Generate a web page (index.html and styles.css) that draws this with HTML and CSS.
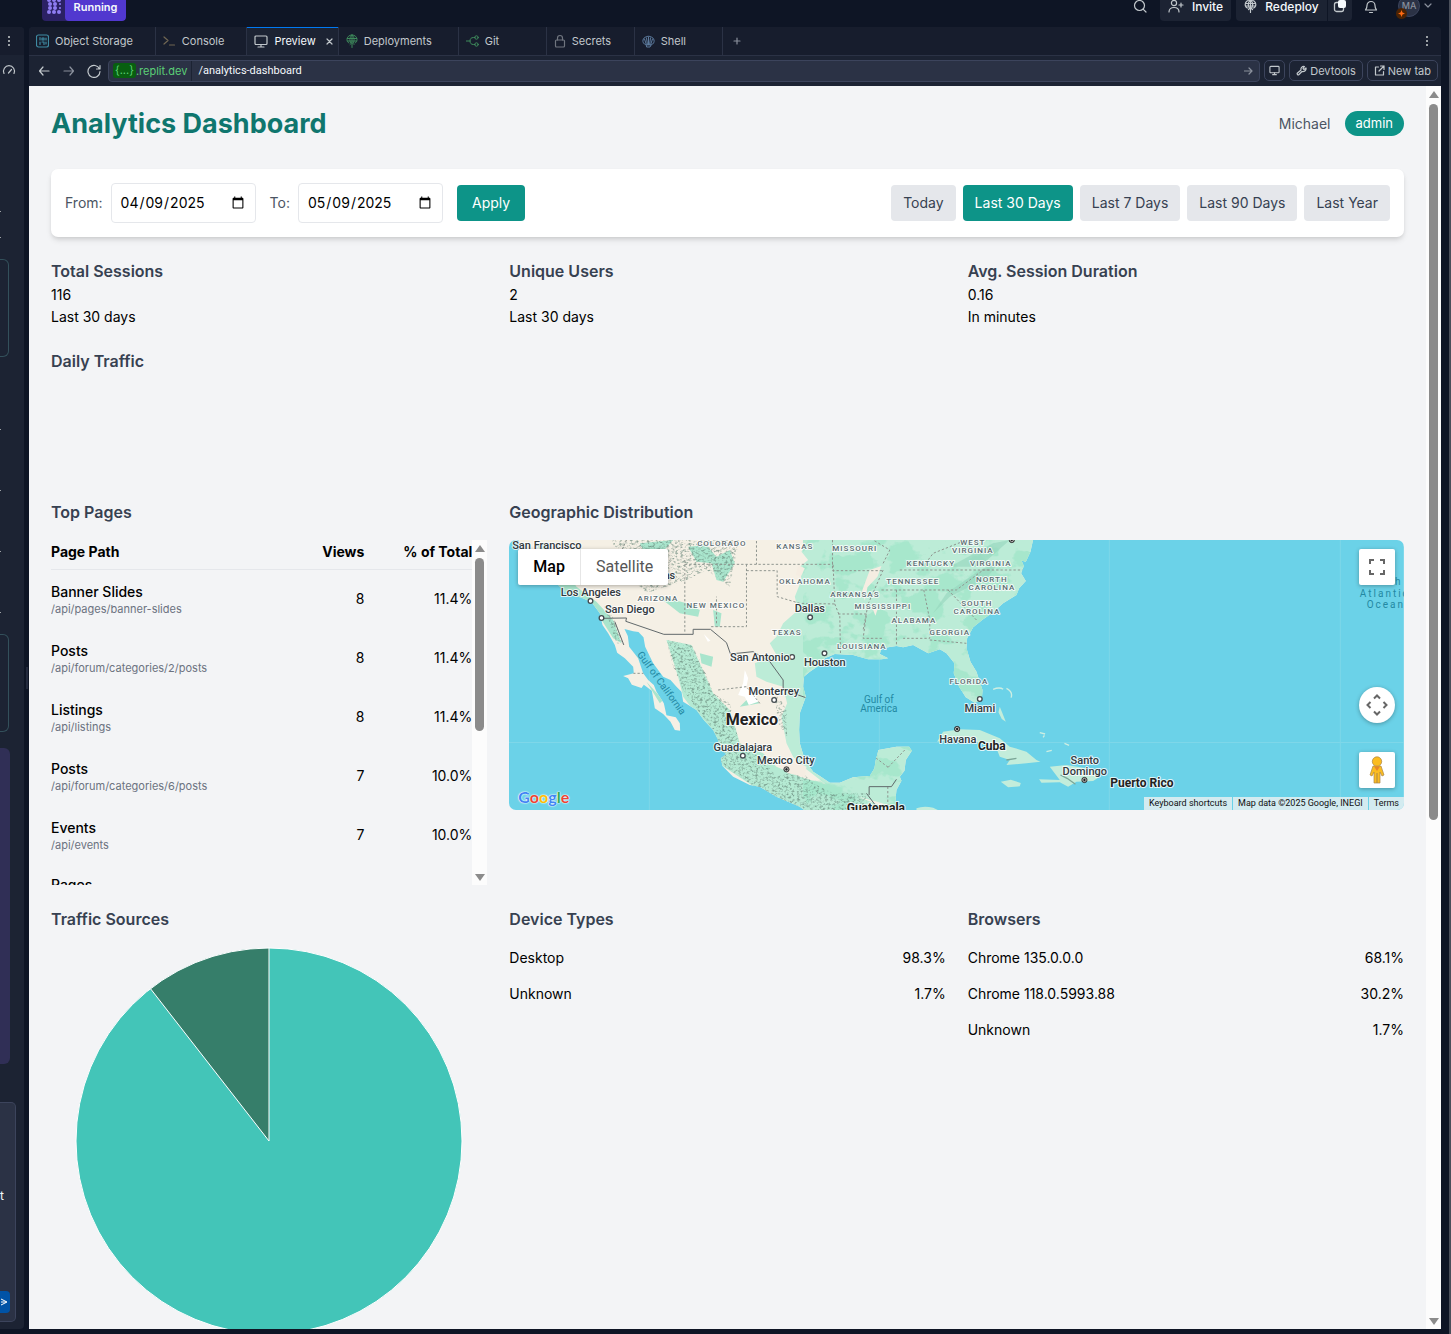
FILE: index.html
```html
<!DOCTYPE html>
<html lang="en">
<head>
<meta charset="utf-8">
<meta name="viewport" content="width=device-width, initial-scale=1">
<title>Analytics Dashboard</title>
<link rel="stylesheet" href="styles.css">
</head>
<body>
<div class="app">
  <header class="topbar">
    <div class="run-state">
      <button class="run-icon" aria-label="Workflows"><svg width="16" height="16" viewBox="0 0 16 16" fill="#8f7df2"><g><circle cx="3" cy="2" r="2"/><circle cx="8" cy="2" r="2"/><circle cx="13" cy="2" r="2"/><circle cx="4" cy="6" r="2"/><circle cx="9" cy="6" r="2"/><circle cx="14" cy="6" r="1"/><circle cx="4" cy="10" r="2"/><circle cx="9" cy="10" r="2"/><circle cx="14" cy="10" r="1"/><circle cx="3" cy="14" r="2"/><circle cx="8" cy="14" r="2"/><circle cx="13" cy="14" r="2"/></g></svg></button>
      <button class="run-label">Running</button>
    </div>
    <div class="top-actions">
      <button class="plain" aria-label="Search"><svg class="ico" width="14" height="14" viewBox="0 0 14 14"><circle cx="6.500" cy="6.500" r="5"/><path d="M10.300 10.300L13 13"/></svg></button>
      <button class="solid invite"><svg class="ico" width="16" height="14" viewBox="0 0 16 14"><circle cx="6" cy="4" r="2.600"/><path d="M1 13c0-3 2-4.500 5-4.500S11 10 11 13M11 6h4M13 4v4"/></svg>Invite</button>
      <div class="split">
        <button class="solid redeploy"><svg class="ico" width="13" height="14" viewBox="0 0 13 14"><path d="M3.500 9C2 8.500 1.200 7 1.200 5.500a5.300 4.500 0 0 1 10.600 0C11.800 7 11 8.500 9.500 9M1.500 4.500h10M2 7h9M6.500 1C4 3 4 6 5 8.500M6.500 1C9 3 9 6 8 8.500M6.500 1v12.500M4.500 10.500l2-2 2 2"/></svg>Redeploy</button>
        <button class="solid square" aria-label="Deployment panes"><svg width="14" height="14" viewBox="0 0 14 14"><rect x="1.500" y="3.500" width="9" height="9" rx="2" fill="none" stroke="#c2c8cc" stroke-width="1.300"/><rect x="5" y="1" width="8" height="8" rx="2" fill="#f5f9fc"/></svg></button>
      </div>
      <button class="plain bell" aria-label="Notifications"><svg class="ico" width="14" height="15" viewBox="0 0 14 15"><path d="M3 6.500a4 4 0 0 1 8 0c0 2.500 1 3.500 1.500 4.500h-11C2 10 3 9 3 6.500zM5.500 13.500h3"/></svg></button>
      <button class="account" aria-label="Account"><span class="avatar">MA<svg class="spark" width="11" height="11" viewBox="0 0 11 11"><circle cx="5.500" cy="5.500" r="5.500" fill="#4b2304"/><path d="M5.500 2l1 2.500L9 5.500l-2.500 1-1 2.500-1-2.500L2 5.500l2.500-1z" fill="#ff6a13"/></svg></span><svg class="ico dim" width="8" height="6" viewBox="0 0 8 6"><path d="M1 1l3 3 3-3"/></svg></button>
    </div>
  </header>

  <div class="workspace">
    <aside class="chat">
      <button class="chat-menu" aria-label="Chat options"><svg width="4" height="12" viewBox="0 0 4 12" fill="#9da2a6"><path d="M1 1h2v2H1zM1 5h2v2H1zM1 9h2v2H1z"/></svg></button>
      <button class="chat-gauge" aria-label="Usage"><svg class="ico" width="14" height="10" viewBox="0 0 14 10"><path d="M2 8.500a5.500 5.500 0 1 1 10 0M6.500 8L9.500 4.500"/></svg></button>
      <div class="chat-log">
        <i class="tick first"></i><i class="tick second"></i>
        <div class="card outline"></div>
        <i class="tick after-card"></i><i class="tick"></i><i class="tick"></i><i class="tick"></i>
        <div class="card outline low"></div>
        <div class="card violet"></div>
      </div>
      <div class="composer"><span class="draft">t</span><button class="send" aria-label="Send"><svg width="8" height="10" viewBox="0 0 8 10" fill="none" stroke="#fff"><path d="M0 2l6 3-6 3M0 5h5"/></svg></button></div>
    </aside>
    <div class="divider"><i class="grip"></i></div>

    <main class="pane">
      <nav class="tabs">
        <button class="tab"><svg class="ico blue" width="13" height="14" viewBox="0 0 13 14"><rect x=".500" y="1" width="12" height="12" rx="2"/><path d="M4 3.500v2.500M4 8v2.500M6 4h2v2h-2zM6 8h2v2.500M10 4v2M10 8v2"/></svg>Object Storage</button>
        <button class="tab"><svg class="ico sand" width="13" height="12" viewBox="0 0 13 12"><path d="M1 2l4 3.500L1 9M6.500 10h5"/></svg>Console</button>
        <div class="tab active"><svg class="ico" width="14" height="13" viewBox="0 0 14 13"><rect x="1" y="1" width="12" height="8.500" rx="1"/><path d="M7 9.500V12M4 12h6"/></svg>Preview<button class="close" aria-label="Close tab"><svg class="ico" width="7" height="7" viewBox="0 0 7 7"><path d="M1 1l5 5M6 1L1 6"/></svg></button></div>
        <button class="tab long"><svg class="ico green" width="12" height="14" viewBox="0 0 12 14"><path d="M3 9C1.500 8.500 1 7 1 5.500a5 4.500 0 0 1 10 0C11 7 10.500 8.500 9 9M1.300 4.500h9.400M1.500 7h9M6 1C3.500 3 3.500 6 4.500 8.500M6 1c2.500 2 2.500 5 1.500 7.500M6 1v12.500M4 10.500l2-2 2 2"/></svg>Deployments</button>
        <button class="tab"><svg class="ico green" width="13" height="12" viewBox="0 0 13 12"><path d="M0 6h4M9 2.500H7.500C5 2.500 4 4 4 6s1 3.500 3.500 3.500H9"/><circle cx="10.500" cy="2.500" r="1.700"/><circle cx="10.500" cy="9.500" r="1.700"/></svg>Git</button>
        <button class="tab"><svg class="ico gray" width="12" height="14" viewBox="0 0 12 14"><rect x="1.500" y="6" width="9" height="7" rx="1"/><path d="M3.500 6V4a2.500 2.500 0 0 1 5 0v2"/></svg>Secrets</button>
        <button class="tab"><svg class="ico steel" width="13" height="13" viewBox="0 0 13 13"><path d="M4 10C1.500 9 .500 7 1 5s2-3 3-3c1-1 4-1 5 0 1 0 2.500 1 3 3s-.500 4-3 5l-1 2H5zM4.500 10L2.500 4M6.500 10V2M8.500 10l2-6M5.500 10L4.500 3M7.500 10l1-7"/></svg>Shell</button>
        <button class="add" aria-label="New tab"><svg class="ico dim" width="8" height="8" viewBox="0 0 8 8"><path d="M4 1v6M1 4h6"/></svg></button>
        <button class="more" aria-label="Pane options"><svg width="4" height="12" viewBox="0 0 4 12" fill="#9da2a6"><path d="M1 1h2v2H1zM1 5h2v2H1zM1 9h2v2H1z"/></svg></button>
      </nav>
      <div class="toolbar">
        <button class="nav" aria-label="Back"><svg class="ico" width="12" height="12" viewBox="0 0 12 12"><path d="M11 6H1.500M5 2L1.500 6 5 10"/></svg></button>
        <button class="nav" aria-label="Forward"><svg class="ico dim" width="12" height="12" viewBox="0 0 12 12"><path d="M1 6h9.500M7 2l3.500 4L7 10"/></svg></button>
        <button class="nav" aria-label="Reload"><svg class="ico" width="14" height="14" viewBox="0 0 14 14"><path d="M13 1.500V5H9.500M12.500 5A6 6 0 1 0 13 7.500"/></svg></button>
        <div class="address">
          <span class="host"><b>{...}</b>.replit.dev</span>
          <input aria-label="Path" value="/analytics-dashboard">
          <button class="go" aria-label="Go"><svg class="ico dim" width="9" height="8" viewBox="0 0 9 8"><path d="M0 4h8M5 1l3 3-3 3"/></svg></button>
        </div>
        <button class="boxed icon-only" aria-label="Device size"><svg class="ico" width="11" height="11" viewBox="0 0 12 11"><rect x="1" y="1" width="10" height="7" rx="1"/><path d="M6 8v2M4 10h4"/></svg></button>
        <button class="boxed"><svg class="ico" width="11" height="11" viewBox="0 0 11 11"><path d="M1.500 9.500c-.700-.700 0-1.500 0-1.500L5 5c-.500-2 1-4 3.500-3.500L7 3.500l1 1L10 3c.500 2-1.500 4-4 3.500L3 9.500s-.800.700-1.500 0z"/></svg>Devtools</button>
        <button class="boxed"><svg class="ico" width="11" height="11" viewBox="0 0 11 11"><path d="M4.500 2h-3v8h8V6.500M6.500 1H10v3.500M10 1L5 6"/></svg>New tab</button>
      </div>

      <div class="viewport">
        <div class="dash">
          <div class="dash-head">
            <h1>Analytics Dashboard</h1>
            <div class="who"><span>Michael</span><span class="role">admin</span></div>
          </div>

          <form class="filters">
            <label for="from">From:</label><input type="date" id="from" value="2025-04-09">
            <label for="to" class="to">To:</label><input type="date" id="to" value="2025-05-09">
            <button type="button" class="btn primary apply">Apply</button>
            <div class="ranges">
              <button type="button" class="btn">Today</button>
              <button type="button" class="btn primary">Last 30 Days</button>
              <button type="button" class="btn">Last 7 Days</button>
              <button type="button" class="btn">Last 90 Days</button>
              <button type="button" class="btn">Last Year</button>
            </div>
          </form>

          <div class="grid stats">
            <section><h2>Total Sessions</h2><p>116</p><p>Last 30 days</p></section>
            <section><h2>Unique Users</h2><p>2</p><p>Last 30 days</p></section>
            <section><h2>Avg. Session Duration</h2><p>0.16</p><p>In minutes</p></section>
          </div>

          <section class="daily"><h2>Daily Traffic</h2></section>

          <div class="grid">
            <section class="panel">
              <h2>Top Pages</h2>
              <div class="scroller">
                <div class="scroll-body">
                  <table>
                    <thead><tr><th>Page Path</th><th class="num">Views</th><th class="num">% of Total</th></tr></thead>
                    <tbody>
                      <tr><td>Banner Slides<small>/api/pages/banner-slides</small></td><td class="num">8</td><td class="num">11.4%</td></tr>
                      <tr><td>Posts<small>/api/forum/categories/2/posts</small></td><td class="num">8</td><td class="num">11.4%</td></tr>
                      <tr><td>Listings<small>/api/listings</small></td><td class="num">8</td><td class="num">11.4%</td></tr>
                      <tr><td>Posts<small>/api/forum/categories/6/posts</small></td><td class="num">7</td><td class="num">10.0%</td></tr>
                      <tr><td>Events<small>/api/events</small></td><td class="num">7</td><td class="num">10.0%</td></tr>
                      <tr class="cut"><td>Pages</td><td></td><td></td></tr>
                    </tbody>
                  </table>
                </div>
                <div class="bar"><i class="up"></i><i class="thumb half"></i><i class="down"></i></div>
              </div>
            </section>

            <section class="panel wide">
              <h2>Geographic Distribution</h2>
              <div class="map">
                <svg class="map-art" viewBox="0 0 895 270" preserveAspectRatio="xMidYMid slice">
                  <defs>
                    <clipPath id="land"><path d="M50 20L70 60 110 110 160 150 200 190 245 203 275 216 300 250 308 285 325 310 345 345 352 368 375 385 400 410 402 430 370 438 385 445 396 464 425 474 432 464 456 482 460 505 465 535 490 552 512 575 525 600 541 602 540 580 528 562 500 556 492 520 470 485 462 465 445 450 430 430 415 385 388 350 384 318 374 297 400 304 416 306 431 322 436 350 460 400 490 440 512 450 530 470 545 485 550 515 590 540 612 570 640 600 655 630 662 660 680 672 663 685 668 708 700 740 750 765 780 770 830 800 900 830 940 860 1190 860 1185 830 1190 780 1205 752 1200 740 1214 722 1218 690 1236 662 1228 650 1190 650 1136 660 1128 690 1124 715 1110 738 1060 742 1020 758 990 758 960 738 940 725 915 690 900 640 898 600 900 550 918 500 910 470 912 440 930 425 960 405 975 385 1005 372 1060 375 1105 388 1145 388 1165 385 1140 372 1145 355 1190 348 1210 352 1240 345 1285 370 1320 358 1340 370 1364 400 1362 430 1378 470 1398 502 1425 518 1446 510 1448 480 1430 425 1412 395 1400 355 1402 325 1420 292 1450 268 1480 247 1510 220 1550 195 1558 175 1578 153 1564 130 1572 108 1558 75 1542 45 1560 90 1578 95 1592 65 1602 20z"/></clipPath>
                    <filter id="relief" x="0" y="0" width="1" height="1" color-interpolation-filters="sRGB"><feTurbulence type="fractalNoise" baseFrequency=".12 .15" numOctaves="3" seed="8"/><feColorMatrix values="0 0 0 0 .40  0 0 0 0 .52  0 0 0 0 .47  3 0 0 0 -1.400"/></filter>
                    <filter id="wood" x="0" y="0" width="1" height="1" color-interpolation-filters="sRGB"><feTurbulence type="fractalNoise" baseFrequency=".012 .016" numOctaves="4" seed="3"/><feColorMatrix values="0 0 0 0 .63  0 0 0 0 .90  0 0 0 0 .79  14 0 0 0 -7"/></filter>
                    <clipPath id="sierra"><path d="M500 330L575 345 600 390 622 440 640 490 690 520 700 570 720 640 790 690 830 740 900 720 940 760 1000 790 1100 790 1100 850 900 840 780 780 660 700 640 600 590 535 550 480 520 410zM820 470L860 540 862 620 835 580zM330 20L500 20 720 20 690 170 620 120 560 150 440 190 380 130zM310 220L345 270 370 340 350 340z"/></clipPath>
                  </defs>
                  <rect width="895" height="270" fill="#6bd2e8"/>
                  <path d="M0 202.500H895M140.500 0V270M370.500 0V270M600.500 0V270M831.500 0V270" stroke="#8bdbea" opacity=".6"/>
                  <g transform="translate(-9 -10) scale(.3333)">
                    <g clip-path="url(#land)">
                      <rect width="1700" height="900" fill="#f5f0e5"/>
                      <path d="M930 20L905 65 925 90 900 110 905 150 885 200 895 240 850 280 830 320 810 340 830 375 790 390 765 400 770 440 800 455 850 470 862 520 845 560 860 640 880 680 910 710 1000 780 1300 860 1700 500 1700 20z" fill="#bcecd7"/>
                      <path d="M500 330L575 345 600 400 618 440 640 490 690 540 700 570 720 640 790 670 830 710 900 740 1000 770 1200 850 900 860 640 690 640 620 550 500 535 440z" fill="#b5ead3"/>
                      <path d="M565 50L620 45 650 80 690 60 705 100 670 155 650 150 635 100 590 95zM470 195L560 220 600 240 595 260 540 250zM420 40L520 30 480 75 430 60zM110 40L150 50 230 170 290 215 340 270 365 340 340 325 280 230 180 180zM600 370L640 380 635 410 605 400zM750 500L780 520 720 530zM640 240L665 250 660 290 645 290zM440 455L490 510 480 520z" fill="#a9e5cd"/>
                      <rect x="910" y="20" width="700" height="830" filter="url(#wood)" opacity=".75"/>
                      <g clip-path="url(#sierra)"><rect width="1200" height="900" filter="url(#relief)" opacity=".7"/></g>
                      <path d="M1300 250L1340 190 1440 120 1500 95 1460 145 1350 200zM1350 110L1480 40 1530 30 1440 110z" fill="#94d6bd" opacity=".6"/>
                      <path d="M1110 120l35-12-12 32-30 32-8 40-8-30zM895 105l20 10-12 25-15-5zM1120 240l15-8-8 25z" fill="#f5ede2"/>
                      <path d="M830 700l60-5 30 15-5 30-50-10z" fill="#f5ede2"/>
                      <path d="M735 420l10 25-6 30 24 10 12 30-28 10-12-25-20-5 15-35zM612 312l20 20-8 3z" fill="#fff"/>
                      <g fill="none" stroke="#8f958f" stroke-width="3" stroke-dasharray="7 6">
                        <path d="M555 90V310M555 103H1000M770 20V103M740 103V290H632M740 122H832V200L900 220 1010 222M998 30V122H1150M1000 105L1005 222 1020 260 1022 370M1015 252H1100L1090 325H1150M1145 180H1370L1450 120H1570M1200 120H1470M1190 180V348M1272 180L1290 270V325H1210M1290 330L1400 340M1150 120L1105 222 1090 300M1270 110L1300 70 1400 30M1345 180L1430 270M1150 100L1170 60 1120 30M380 30L330 140M655 480L740 470 780 520M400 430H450M1164 770V840M1165 712L1215 660M1165 712L1110 670M650 280V200"/>
                      </g>
                      <path d="M305 265L380 264 378 274 492 313H580V298H632L680 338 692 372 760 365 810 395 850 450V475L895 495 918 503M1108 795V770H1175L1190 748M345 275L372 345M1100 790L1130 830" fill="none" stroke="#60686a" stroke-width="3"/>
                    </g>
                    <path d="M1312 635L1330 605 1380 598 1440 600 1500 625 1530 650 1580 665 1610 690 1622 695 1580 700 1520 705 1530 690 1500 680 1490 655 1430 635 1385 622zM1503 755l30-6 30 10-3 10-35 3zM1618 748L1680 750 1650 710 1700 705 1760 715 1800 740 1780 753 1730 755 1705 770 1680 757 1625 758zM1500 530l8 20 10 25-12-8-10-20zM1250 835q20-8 50-2l20 10h-70z" fill="#c3eddb"/>
                    <path d="M1480 478q20-8 30 0M1520 475q20 10 14 28M1620 608l16 4M1630 622l4-6M1640 665l16-4M1694 640l14 6" fill="none" stroke="#cdeee2" stroke-width="4"/>
                    <path d="M1682 735l20 10 25 18M1520 690l30-5" stroke="#7ba697" stroke-width="4" fill="none"/>
                    <g fill="#fff" stroke="#444b50" stroke-width="4"><circle cx="272" cy="213" r="7"/><circle cx="305" cy="264" r="7"/><circle cx="823" cy="510" r="7"/><circle cx="729" cy="677" r="7"/><circle cx="877" cy="381" r="7"/><circle cx="931" cy="262" r="7"/><circle cx="974" cy="370" r="7"/><circle cx="1440" cy="507" r="7"/></g>
                    <g fill="#222" stroke="#333" stroke-width="2"><circle cx="860" cy="718" r="8"/><circle cx="1372" cy="597" r="8"/><circle cx="1754" cy="750" r="8"/><circle cx="1536" cy="30" r="8"/></g>
                    <g fill="none" stroke="#fff" stroke-width="2"><circle cx="860" cy="718" r="5"/><circle cx="1372" cy="597" r="5"/><circle cx="1754" cy="750" r="5"/><circle cx="1536" cy="30" r="5"/></g>
                  </g>
                  <g class="state">
                    <text x="213" y="6">COLORADO</text><text x="286" y="9">KANSAS</text><text x="346" y="11">MISSOURI</text><text x="464" y="5">WEST</text><text x="464" y="13">VIRGINIA</text><text x="422" y="26">KENTUCKY</text><text x="482" y="26">VIRGINIA</text><text x="296" y="44">OKLAHOMA</text><text x="404" y="44">TENNESSEE</text><text x="483" y="42">NORTH</text><text x="483" y="50">CAROLINA</text><text x="346" y="57">ARKANSAS</text><text x="374" y="69">MISSISSIPPI</text><text x="468" y="66">SOUTH</text><text x="468" y="74">CAROLINA</text><text x="405" y="83">ALABAMA</text><text x="441" y="95">GEORGIA</text><text x="353" y="109">LOUISIANA</text><text x="278" y="95">TEXAS</text><text x="149" y="61">ARIZONA</text><text x="207" y="68">NEW MEXICO</text><text x="460" y="144">FLORIDA</text>
                  </g>
                  <g class="city">
                    <text x="38" y="9">San Francisco</text><text x="141" y="39">Las Vegas</text><text x="82" y="56">Los Angeles</text><text x="121" y="73">San Diego</text><text x="301" y="72">Dallas</text><text x="316" y="126">Houston</text><text x="251" y="121">San Antonio</text><text x="265" y="155">Monterrey</text><text x="234" y="211">Guadalajara</text><text x="277" y="224">Mexico City</text><text x="449" y="203">Havana</text><text x="471" y="172">Miami</text><text x="576" y="224">Santo</text><text x="576" y="235">Domingo</text>
                  </g>
                  <g class="country">
                    <text class="big" x="243" y="185">Mexico</text><text x="367" y="272">Guatemala</text><text x="483" y="210">Cuba</text><text x="633" y="247">Puerto Rico</text>
                  </g>
                  <g class="sea">
                    <text x="370" y="163">Gulf of</text><text x="370" y="172">America</text><text transform="translate(150 145) rotate(54)">Gulf of California</text>
                    <text class="spaced" x="876" y="45">North</text><text class="spaced" x="876" y="57">Atlantic</text><text class="spaced" x="877" y="68">Ocean</text>
                  </g>
                </svg>
                <div class="map-type"><button class="on">Map</button><button>Satellite</button></div>
                <div class="map-tools">
                  <button class="tool" aria-label="Full screen"><svg width="18" height="18" viewBox="0 0 18 18" fill="none" stroke="#666" stroke-width="2"><path d="M2 6V2h4M12 2h4v4M16 12v4h-4M6 16H2v-4"/></svg></button>
                  <button class="tool round" aria-label="Camera controls"><svg width="22" height="22" viewBox="0 0 22 22" fill="none" stroke="#666" stroke-width="2"><path d="M8 4.500l3-3 3 3M8 17.500l3 3 3-3M4.500 8l-3 3 3 3M17.500 8l3 3-3 3"/></svg></button>
                  <button class="tool" aria-label="Street View"><svg width="16" height="28" viewBox="0 0 16 28"><path d="M4 10h8l3 9-2 1-2-4v11H5V16l-2 4-2-1z" fill="#fbbc20" stroke="#a98548" stroke-width=".7"/><path d="M8 17v10" stroke="#a98548"/><circle cx="8" cy="5.500" r="4.700" fill="#fbbc20" stroke="#a98548" stroke-width=".7"/><path d="M5 10.500h6L8 15z" fill="#e8862a"/></svg></button>
                </div>
                <div class="google"><span class="g1">G</span><span class="g2">o</span><span class="g3">o</span><span class="g1">g</span><span class="g4">l</span><span class="g2">e</span></div>
                <div class="credits"><button>Keyboard shortcuts</button><span>Map data ©2025 Google, INEGI</span><a href="#terms">Terms</a></div>
              </div>
            </section>
          </div>

          <div class="grid">
            <section class="panel">
              <h2>Traffic Sources</h2>
              <svg class="pie" viewBox="-194 -194 388 388" role="img" aria-label="Traffic sources">
                <circle r="193" fill="#43c5b8"/>
                <path d="M0 0L-118.500-152.300A193 193 0 0 1 0-193z" fill="#367e6a"/>
                <path d="M-118.500-152.300L0 0V-193" fill="none" stroke="#fff"/>
                <circle r="193" fill="none" stroke="#fff"/>
              </svg>
            </section>
            <section class="panel">
              <h2>Device Types</h2>
              <ul><li><span>Desktop</span><span>98.3%</span></li><li><span>Unknown</span><span>1.7%</span></li></ul>
            </section>
            <section class="panel">
              <h2>Browsers</h2>
              <ul><li><span>Chrome 135.0.0.0</span><span>68.1%</span></li><li><span>Chrome 118.0.5993.88</span><span>30.2%</span></li><li><span>Unknown</span><span>1.7%</span></li></ul>
            </section>
          </div>
        </div>
        <div class="bar"><i class="up"></i><i class="thumb"></i><i class="down"></i></div>
      </div>
    </main>
  </div>
</div>
</body>
</html>
```
FILE: styles.css
```css
* { box-sizing: border-box; }
body { margin: 0; background: #0e1525; font-family: Inter, "Liberation Sans", sans-serif; }
h1, h2, p, ul { margin: 0; padding: 0; }
ul { list-style: none; }
button { border: 0; background: none; padding: 0; color: inherit; font: inherit; display: flex; align-items: center; justify-content: center; cursor: pointer; }
svg { display: block; flex: none; }
.ico { fill: none; stroke: #c2c8cc; stroke-width: 1.2; stroke-linecap: round; stroke-linejoin: round; }
.ico.dim { stroke: #8a909c; }
.ico.blue { stroke: #3f8ba3; }
.ico.sand { stroke: #716753; }
.ico.green { stroke: #3f8b5c; stroke-width: 1; }
.ico.gray { stroke: #70757f; }
.ico.steel { stroke: #5d7b9e; stroke-width: 1; }

.app { height: 100vh; display: flex; flex-direction: column; overflow: hidden; border-right: 2px solid #4a4f5a; padding-bottom: 5px; }

/* Workspace header */
.topbar { height: 27px; flex: none; display: flex; align-items: flex-end; justify-content: space-between; padding: 0 17px 6px 42px; overflow: hidden; color: #f5f9fc; font-size: 12px; font-weight: 500; }
.topbar button { height: 30px; }
.run-state { display: flex; background: #2b2164; border-radius: 4px; overflow: hidden; }
.run-icon { width: 23px; }
.run-label { background: #5138cf; width: 61px; border-radius: 4px; font-weight: 600; font-size: 11px; padding-top: 2px; }
.top-actions { display: flex; }
.solid { background: #1c2333; border-radius: 4px; gap: 8px; }
.plain { width: 14px; }
.invite { width: 71px; margin: 0 5px 0 13px; }
.split { display: flex; gap: 1px; }
.redeploy { width: 91px; border-radius: 4px 0 0 4px; }
.square { width: 24px; border-radius: 0 4px 4px 0; }
.bell { margin: 0 20px 0 12px; width: 14px; }
.account { gap: 4px; }
.avatar { position: relative; width: 22px; height: 22px; border-radius: 50%; background: #2b3245; border: 1px solid #3c445c; color: #8a909c; font-size: 9px; line-height: 20px; text-align: center; }
.spark { position: absolute; left: -3px; bottom: -3px; }

.workspace { flex: 1; min-height: 0; display: flex; padding-right: 8px; }

/* Assistant column */
.chat { width: 24px; background: #1c2333; border-radius: 0 4px 4px 0; display: flex; flex-direction: column; padding-bottom: 7px; }
.chat-menu { height: 28px; background: #171d2d; padding-right: 6px; border-radius: 0 4px 0 0; }
.chat-gauge { height: 30px; width: 18px; }
.chat-log { flex: 1; min-height: 0; display: flex; flex-direction: column; }
.tick { flex: none; width: 1px; height: 1px; background: #9da2a6; margin-bottom: 60px; }
.tick.first { margin: 126px 0 25px; }
.tick.second { margin-bottom: 21px; }
.tick.after-card { margin-top: 72px; }
.card { flex: none; width: 9px; height: 98px; border-radius: 0 6px 6px 0; }
.outline { border: 1px solid #33505b; border-left: 0; }
.low { margin-bottom: 16px; margin-top: -39px; }
.violet { width: 10px; height: 316px; background: #302f56; }
.composer { width: 16px; height: 220px; background: #2b3245; border: 1px solid #3c445c; border-left: 0; border-radius: 0 5px 5px 0; display: flex; flex-direction: column; justify-content: flex-end; gap: 87px; padding-bottom: 8px; color: #f5f9fc; font-size: 12px; line-height: 16px; }
.send { width: 10px; height: 22px; background: #0053a6; border-radius: 0 4px 4px 0; }
.divider { width: 5px; display: flex; flex-direction: column; padding: 640px 1px 0 2px; }
.grip { height: 22px; background: #232a3d; }

/* Preview pane */
.pane { flex: 1; min-width: 0; display: flex; flex-direction: column; border-radius: 4px 4px 0 0; overflow: hidden; background: #1c2333; color: #c2c8cc; font-size: 11px; }
.tabs { height: 29px; flex: none; display: flex; background: #171d2d; border-bottom: 1px solid #2b3245; }
.tab { display: flex; align-items: center; justify-content: flex-start; gap: 6px; padding: 0 22px 0 7px; min-width: 88px; border-right: 1px solid #2b3245; }
.tab.long { min-width: 120px; }
.tab.active { background: #1c2333; box-shadow: inset 0 1px #0079f2; color: #f5f9fc; padding-right: 5px; }
.close { margin-left: 4px; }
.add { width: 28px; }
.more { margin-left: auto; width: 28px; }
.toolbar { height: 29px; margin-bottom: 1px; flex: none; display: flex; align-items: center; gap: 4px; padding: 0 3px 0 4px; }
.nav { width: 21px; height: 22px; }
.address { flex: 1; height: 22px; display: flex; background: #2b3245; border: 1px solid #3c445c; border-radius: 4px; }
.host { display: flex; align-items: center; padding: 0 4px; color: #5bcf77; border-right: 1px solid #1c2333; }
.host b { background: #085f10; font-weight: 400; border-radius: 3px; line-height: 15px; padding: 0 2px; }
.address input { flex: 1; min-width: 0; border: 0; background: none; color: #f5f9fc; font: 11px Roboto, "Liberation Sans", sans-serif; padding: 0 6px; }
.go { width: 22px; }
.boxed { height: 21px; padding: 0 6px; gap: 3px; border: 1px solid #3c445c; border-radius: 5px; }
.icon-only { padding: 0 4px; }

.viewport { flex: 1; min-height: 0; display: flex; overflow: hidden; background: #f3f4f6; color: #000; font-size: 14px; line-height: 22px; }
.dash { flex: 1; min-width: 0; padding: 22px; display: flex; flex-direction: column; gap: 22px; height: max-content; }
.dash-head { display: flex; align-items: center; justify-content: space-between; height: 31px; margin-bottom: 8px; }
h1 { font-size: 27px; line-height: 31px; font-weight: 700; color: #0f766e; }
.who { display: flex; align-items: center; gap: 14px; color: #4b5563; }
.role { background: #0d9488; color: #fff; border-radius: 13px; font-size: 13px; line-height: 25px; padding: 0 11px; }

.filters { display: flex; align-items: center; gap: 8px; background: #fff; border-radius: 7px; padding: 14px; box-shadow: 0 4px 6px -1px #0000001a, 0 2px 4px -1px #0000001a; color: #4b5563; }
.filters input { width: 145px; height: 40px; border: 1px solid #e5e7eb; border-radius: 4px; background: #fff; color: #000; font: inherit; padding: 0 8px; }
.to { margin-left: 6px; }
.btn { height: 36px; padding: 0 12px; background: #e5e7eb; color: #374151; border-radius: 4px; white-space: nowrap; }
.primary { background: #0d9488; color: #fff; }
.apply { padding: 0 15px; margin-left: 6px; }
.ranges { margin-left: auto; display: flex; gap: 7px; }

.grid { display: grid; grid-template-columns: repeat(3, minmax(0, 1fr)); gap: 22px; }
h2 { font-size: 16px; line-height: 24px; font-weight: 600; color: #374151; }
.stats { height: 68px; }
.stats h2 { margin-bottom: 1px; }
.daily { min-height: 129px; }
.panel h2 { margin-bottom: 16px; }
.wide { grid-column: span 2; }
.scroller { display: flex; height: 345px; }
.scroll-body { flex: 1; overflow: hidden; }
table { width: 100%; border-collapse: collapse; table-layout: fixed; }
th, td { padding: 0; text-align: left; height: 59px; }
th { height: 29px; padding-bottom: 5px; font-weight: 700; border-bottom: 1px solid #e5e7eb; }
td { vertical-align: middle; line-height: 20px; }
td:first-child { font-weight: 500; }
small { display: block; font-size: 11px; line-height: 14px; font-weight: 400; color: #6b7280; }
th.num, td.num { text-align: right; width: 108px; }
.cut td { vertical-align: top; padding-top: 11px; }
.bar { width: 15px; flex: none; background: #fcfcfc; display: flex; flex-direction: column; align-items: center; padding: 5px 0 4px; }
.up, .down { border: 5px solid transparent; border-top: 0; border-bottom: 7px solid #8b8b8b; }
.down { border-bottom: 0; border-top: 7px solid #8b8b8b; margin-top: auto; }
.thumb { width: 9px; height: 58%; margin-top: 6px; border-radius: 5px; background: #8b8b8b; }
.half { height: 173px; }

/* Map */
.map { position: relative; height: 270px; border-radius: 7px; overflow: hidden; font-family: Roboto, "Liberation Sans", sans-serif; }
.map-art { width: 100%; height: 100%; }
.map-art text { text-anchor: middle; paint-order: stroke; stroke: #ffffffcc; stroke-width: 2px; stroke-linejoin: round; }
.state { font-size: 8px; font-weight: 500; fill: #5c6d72; letter-spacing: 1px; }
.city { font-size: 11px; font-weight: 500; fill: #333a3f; }
.country { font-size: 12px; font-weight: 700; fill: #222; }
.country .big { font-size: 16px; }
.sea { font-size: 10px; fill: #2389a3; }
.map-art .sea text { stroke: none; }
.spaced { letter-spacing: 2px; }
.map-type { position: absolute; left: 9px; top: 9px; display: flex; background: #fff; border-radius: 2px; box-shadow: 0 1px 4px #0000004d; font-size: 16px; color: #565656; }
.map-type button { height: 36px; padding: 0 15px; }
.map-type .on { font-weight: 500; color: #000; border-right: 1px solid #e6e6e6; }
.map-tools { position: absolute; right: 9px; top: 9px; bottom: 22px; display: flex; flex-direction: column; gap: 29px; }
.tool { width: 36px; height: 36px; background: #fff; border-radius: 2px; box-shadow: 0 1px 4px #0000004d; }
.round { border-radius: 50%; margin-top: auto; }
.google { position: absolute; left: 9px; bottom: 3px; font-family: Lato, sans-serif; font-size: 16px; font-weight: 700; line-height: 20px; text-shadow: 0 0 2px #fff, 0 0 1px #fff, 0 0 1px #fff; }
.g1 { color: #4285f4; } .g2 { color: #ea4335; } .g3 { color: #fbbc05; } .g4 { color: #34a853; }
.credits { position: absolute; right: 0; bottom: 0; display: flex; gap: 1px; font-size: 9px; line-height: 13px; color: #111; }
.credits > * { background: #d3ebf0; padding: 0 5px; color: inherit; text-decoration: none; }

.pie { display: block; width: 388px; max-width: 100%; margin: 0 auto; }
li { display: flex; justify-content: space-between; margin-bottom: 14px; }
```
